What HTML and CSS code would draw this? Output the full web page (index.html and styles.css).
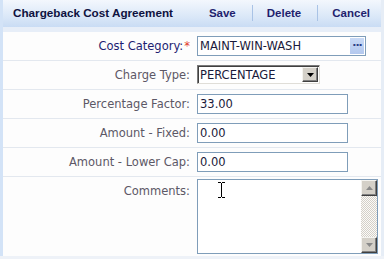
FILE: index.html
```html
<!DOCTYPE html>
<html lang="en">
<head>
    <meta charset="UTF-8">
    <title>Chargeback Cost Agreement</title>
    <link rel="stylesheet" href="styles.css">
</head>
<body>
    <div class="panel">
        <div class="header">
            <span class="title">Chargeback Cost Agreement</span>
            <div class="actions">
                <a class="action">Save</a>
                <span class="sep"></span>
                <a class="action">Delete</a>
                <span class="sep"></span>
                <a class="action">Cancel</a>
            </div>
        </div>
        <div class="band"></div>

        <div class="row">
            <label class="label required">Cost Category:<span class="star">*</span></label>
            <div class="field">
                <div class="lookup">
                    <span class="value">MAINT-WIN-WASH</span>
                    <span class="dots">&middot;&middot;&middot;</span>
                </div>
            </div>
        </div>
        <div class="row">
            <label class="label">Charge Type:</label>
            <div class="field">
                <div class="select">
                    <span class="value">PERCENTAGE</span>
                    <span class="drop">
                        <svg width="7" height="4" viewBox="0 0 7 4"><path d="M0 0h7L3.5 4z" fill="#000"/></svg>
                    </span>
                </div>
            </div>
        </div>
        <div class="row">
            <label class="label">Percentage Factor:</label>
            <div class="field"><div class="text">33.00</div></div>
        </div>
        <div class="row">
            <label class="label">Amount - Fixed:</label>
            <div class="field"><div class="text">0.00</div></div>
        </div>
        <div class="row">
            <label class="label">Amount - Lower Cap:</label>
            <div class="field"><div class="text">0.00</div></div>
        </div>
        <div class="row comments">
            <label class="label">Comments:</label>
            <div class="field">
                <div class="memo">
                    <div class="memo-body">
                        <svg class="cursor" width="9" height="16" viewBox="0 0 9 16">
                            <path d="M1 0.5h3M5 0.5h3M4.5 1v14M1 15.5h3M5 15.5h3" stroke="#000" stroke-width="1" fill="none"/>
                        </svg>
                    </div>
                    <div class="scroll">
                        <span class="sbtn">
                            <svg width="7" height="4" viewBox="0 0 7 4"><path d="M0 4h7L3.5 0z" fill="#8a8a8a"/></svg>
                        </span>
                        <span class="track"></span>
                        <span class="sbtn">
                            <svg width="7" height="4" viewBox="0 0 7 4"><path d="M0 0h7L3.5 4z" fill="#8a8a8a"/></svg>
                        </span>
                    </div>
                </div>
            </div>
        </div>
    </div>
</body>
</html>
```

FILE: styles.css
```css
* {
    box-sizing: border-box;
    margin: 0;
    padding: 0;
}

body {
    background-color: #eef2f8;
    font-family: "DejaVu Sans", Verdana, sans-serif;
    font-size: 11.5px;
}

.panel {
    border-left: 3px solid #d3e3f7;
    border-right: 3px solid #e6edf6;
    background-color: #fdfdfd;
    height: 256px;
}

.header {
    height: 27px;
    display: flex;
    align-items: center;
    justify-content: space-between;
    padding: 0 0 2px 10px;
    background: linear-gradient(#f3f7fd, #dbe8f8 60%, #c9dcf4);
}

.title {
    font-family: "Liberation Sans", Arial, sans-serif;
    font-weight: bold;
    font-size: 11.7px;
    color: #0e1240;
}

.actions {
    display: flex;
    align-items: center;
}

.action {
    font-family: "Liberation Sans", Arial, sans-serif;
    font-weight: bold;
    font-size: 11.5px;
    color: #1f1f6e;
    padding: 0 16px 0 14px;
}

.action:last-child {
    padding-right: 11px;
}

.sep {
    width: 1px;
    height: 16px;
    background-color: #a9c3e6;
}

.band {
    height: 5px;
    background-color: #e7eef8;
}

.row {
    display: grid;
    grid-template-columns: 187px 1fr;
    column-gap: 7px;
    align-items: center;
    height: 29px;
    padding: 2px 0 3px;
    border-bottom: 1px solid #e3e8ef;
}

.label {
    text-align: right;
    color: #5c5866;
}

.label.required {
    color: #1d1d72;
}

.star {
    color: #e23a2a;
    padding-left: 1px;
}

.text,
.lookup {
    height: 20px;
    width: 151px;
    border: 1px solid #7f9db9;
    background-color: #fff;
    padding: 0 2px;
    line-height: 18px;
    color: #1a1a3a;
}

.lookup {
    width: 169px;
    display: flex;
    align-items: center;
    justify-content: space-between;
    padding-right: 1px;
}

.dots {
    width: 14px;
    height: 16px;
    background: linear-gradient(#c9daf6, #b3c8ee);
    color: #2d3e86;
    font-weight: bold;
    font-size: 11px;
    line-height: 16px;
    text-align: center;
    letter-spacing: -1px;
}

.select {
    width: 123px;
    height: 19px;
    display: flex;
    align-items: stretch;
    justify-content: space-between;
    border: 1px solid;
    border-color: #7a7a7a #e0ded8 #e0ded8 #7a7a7a;
    box-shadow: inset 1px 1px 0 #404040;
    background-color: #fff;
    padding: 1px 1px 1px 2px;
    color: #1a1a3a;
    line-height: 16px;
}

.drop,
.sbtn {
    width: 16px;
    display: flex;
    align-items: center;
    justify-content: center;
    background-color: #d4d0c8;
    border: 1px solid;
    border-color: #f4f3ef #404040 #404040 #f4f3ef;
    box-shadow: inset -1px -1px 0 #808080;
}

.comments {
    height: 80px;
    align-items: start;
    padding: 2px 0 2px;
}

.comments .label {
    padding-top: 5px;
}

.memo {
    width: 181px;
    height: 75px;
    border: 1px solid #7f9db9;
    background-color: #fff;
    display: flex;
}

.memo-body {
    flex: 1;
    position: relative;
}

.cursor {
    position: absolute;
    left: 19px;
    top: 2px;
}

.scroll {
    width: 16px;
    display: flex;
    flex-direction: column;
}

.sbtn {
    height: 16px;
}

.track {
    flex: 1;
    background: repeating-conic-gradient(#d4d0c8 0 25%, #fbfaf8 0 50%) 0 0 / 2px 2px;
}
```
